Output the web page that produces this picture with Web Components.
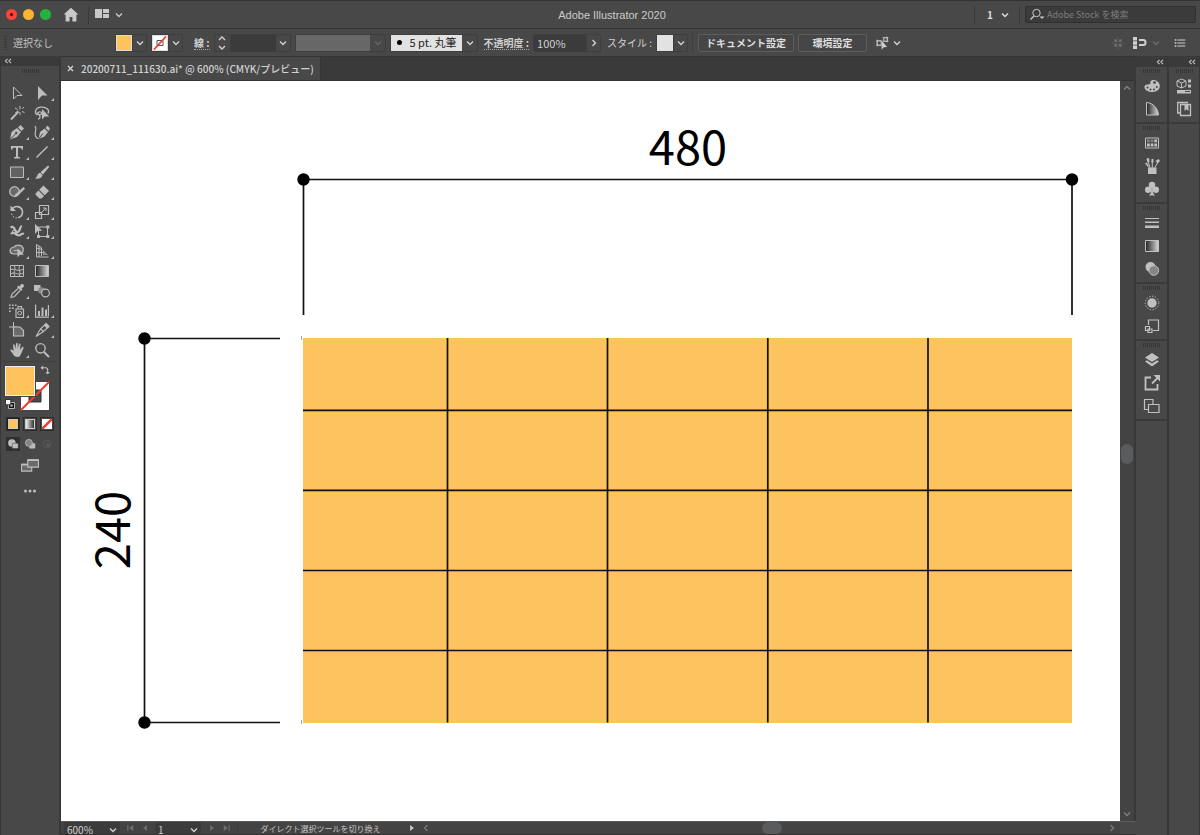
<!DOCTYPE html>
<html lang="ja">
<head>
<meta charset="utf-8">
<title>Adobe Illustrator 2020</title>
<style>
html,body{margin:0;height:100%;background:#333}
</style>
</head>
<body>
<ai-app></ai-app>
<script>
const JP = '"Noto Sans CJK JP", sans-serif';
const BASE = `
*{box-sizing:border-box}
:host{display:block}
button,select,input{font:inherit;color:inherit;margin:0;padding:0;border:0;background:none;border-radius:0;appearance:none;outline:0}
button{display:flex;align-items:center;justify-content:center;flex:none}
.drop{display:grid;grid-template-columns:1fr 14px;align-items:center}
.drop select{grid-area:1/1/2/3;height:100%;width:100%}
.drop ui-icon{grid-area:1/2;justify-self:center;pointer-events:none}
`;
function define(name, css, html){
  const t = document.createElement('template');
  t.innerHTML = `<style>${BASE}${css}</style>${html}`;
  customElements.define(name, class extends HTMLElement{
    constructor(){
      super();
      this.attachShadow({mode:'open'}).append(t.content.cloneNode(true));
    }
  });
}

/* 16-unit icon set; shapes are filled unless marked with class "s" (stroke) */
const ICONS = {
  down:'<path class="s" d="M5 6.500l3 3 3-3"/>',
  up:'<path class="s" d="M5 9.500l3-3 3 3"/>',
  right:'<path class="s" d="M6.500 5l3 3-3 3"/>',
  left:'<path class="s" d="M9.500 5l-3 3 3 3"/>',
  stepper:'<path class="s" d="M5 5l3-3 3 3M5 11l3 3 3-3"/>',
  collapse:'<path class="s" stroke-width="1.300" d="M7.500 5.500L5 8l2.500 2.500M11.500 5.500L9 8l2.500 2.500"/>',
  home:'<path d="M8 .8L.6 7.600h2V14.500h4V10h2.800v4.500h4V7.600h2z"/>',
  workspace:'<path d="M1 2h7v9H1zM9 2h6v4H9zM9 7h6v4H9z"/>',
  search:'<circle class="s" cx="7.500" cy="6" r="3.700"/><path class="s" stroke-width="1.500" d="M5 9L1.500 12.500"/><path d="M10.500 9.500h5L13 12z"/>',
  first:'<path d="M3 4h1.500v8H3zM11 4v8L5.500 8z"/>',
  prev:'<path d="M10.500 4v8L5.500 8z"/>',
  next:'<path d="M5.500 4v8l5-4z"/>',
  last:'<path d="M5 4v8l5.500-4zM11.500 4H13v8h-1.500z"/>',
  isolate:'<path class="s" d="M2.500 5.500H7v5H2.500zM10 2h4v4h-4z"/><path class="s" d="M1 5.500h7M1 10.500h6M8.500 2h7M8.500 6h7M2.500 4v8M14 .5v7" stroke-width=".7"/><path d="M7.500 5v10.500l2.500-2.700 3.800-.3z"/>',
  pixels:'<path d="M3 3h4v4H3zM9 3h4v4H9zM3 9h4v4H3zM9 9h4v4H9zM7.500 0h1v2h-1zM7.500 14h1v2h-1zM0 7.500h2v1H0zM14 7.500h2v1h-2z"/>',
  snap:'<path d="M1 2h4v3.500H1zM1 6.300h4v3.500H1zM1 10.500h4V14H1z"/><path class="s" stroke-width="2" d="M7 5h4.500q2 0 2 2.500t-2 2.500H7"/>',
  menu:'<path d="M1 3h2.200v2H1zM1 7h2.200v2H1zM1 11h2.200v2H1zM4.500 3.200H15v1.500H4.500zM4.500 7.200H15v1.500H4.500zM4.500 11.200H15v1.500H4.500z"/>',
  select:'<path class="s" d="M4.500 2v12l3.500-3.500h5z"/>',
  direct:'<path d="M4 1v14l4-4.600h5.500z"/>',
  wand:'<path class="s" stroke-width="2" d="M2 14.500l7.500-8"/><path class="s" d="M11 1v3.500M11 7v3M6 3l2.500 1.500M13 6.500l2.500 1M13.300 3.700L15 2M6.500 8L9 5.500"/>',
  lasso:'<path class="s" stroke-width="1.300" d="M3.500 10C0 8 1 3 6.500 2.200c6-.8 9.500 3 7.500 6.300M3.500 10c-1-3 4-4.500 4-1.500 0 2-4 1.500-3.500-.5M5 10c2.500 2 0 4-1 4"/><path d="M8 4v10.500l2.800-3h4.500z"/>',
  pen:'<path d="M1 15.500l1.500-7.500L8 4 12 8l-4 5zM9 3.500L11.500 1 15 4.500l-2.500 2.500z"/><path d="M1 15.500l5.500-5.500" stroke="#484848" stroke-width="1"/><circle cx="7.200" cy="9" r="1.200" fill="#484848"/>',
  curve:'<path d="M4.500 15l1.500-7L10.500 4.500 14 8l-3.500 4.500zM11.500 4L13.500 1.500 16 4.500 14.700 7z"/><path d="M4.500 15l4.500-5.500" stroke="#484848"/><path class="s" stroke-width="1.200" d="M1 2c2.500 3-1 6 .5 10 .7 2 2 2.500 3 2.800"/>',
  type:'<path d="M2 2h12v3.500h-1.300L12 3.700H9v9l2 .5v1.300H5v-1.300l2-.5v-9H4l-.7 1.800H2z"/>',
  line:'<path class="s" stroke-width="1.400" d="M2.500 13.500l11-11"/>',
  rect:'<path class="s" style="fill:#626262" d="M1.500 3h13v10.500h-13z"/>',
  brush:'<path d="M14 1.500l1.300 1.300L9 10.500 6.500 8.300zM6 8.800l2.500 2.300C8 14 5 15.300 1 14.500 3.500 13.500 3 9.500 6 8.800z"/>',
  shaper:'<circle class="s" stroke-width="1.300" style="fill:#6a6a6a" cx="5.500" cy="7.500" r="4.800"/><path d="M14.500 3L16 4.700 8.500 12 5 13.500 6.500 10.300z"/>',
  eraser:'<path d="M9.500 1.500L15 7l-4.300 4.300-5.500-5.500zM4.500 6.500l5.500 5.500-2.500 2.500H5.300L1.500 10.500V9.500z"/>',
  rotate:'<path class="s" stroke-width="1.600" d="M3.500 4.500C7 .5 13.500 3 13.500 8c0 3-2 5-4.500 5.700"/><path d="M1.500 1.500V7H7z"/><path class="s" stroke-dasharray="1.500 1.500" d="M8 14c-3 0-5.300-2-5.500-5"/>',
  scale:'<path class="s" stroke-width="1.200" d="M1.500 8.500h6v6h-6zM5.500 1.500h9v9h-9z"/><path class="s" d="M8 8l4-4M9 4h3v3"/>',
  width:'<path class="s" stroke-width="2.200" d="M1.500 4.500C6 1.500 6 11 9 9s1.500-6 4-5.500M2 11c3-4 5 3 9 1 3-1.500 2-2 4-1"/><circle class="s" cx="5" cy="9" r="1.700"/>',
  free:'<path class="s" d="M4.500 4h9v9.500h-9z"/><path d="M1 1v10l3-3.200h4.300zM12.300 2.500h3v3h-3zM12.300 12h3v3h-3zM3 12h3v3H3z"/>',
  builder:'<path class="s" stroke-width="1.200" style="fill:#6a6a6a" d="M5 4c3-3 9-2 9.300 2 .3 4-3.300 5.500-5.300 5H4C0 10 0 5 5 4z"/><path class="s" d="M5 7.500h6"/><path d="M8.500 5.500v9l2.400-2.700H15z"/>',
  perspective:'<path class="s" d="M2.500 1.500v12.500h12M2.500 1.500l5 3v8.500M2.500 5l6 1.500M2.500 9.500h7M5 3v11"/><path d="M9 7l5 5H9z" opacity=".6"/>',
  mesh:'<path class="s" d="M1.500 2.500h13v11h-13zM1.500 7c4-3 6 3 13-1M1.500 11c4-3 7 2 13-1M5 2.500c3 4-2 6 1 11M11 2.500c-3 4 2 6-1 11"/>',
  gradient:'<path class="s" style="fill:url(#g)" d="M1.500 2.500h13v11h-13z"/>',
  eyedrop:'<path d="M8 4l1.500-1.500 1 1 1.500-2c1.500-1.500 4 .8 2.500 2.500l-2 1.500 1 1L12 8z"/><path class="s" stroke-width="1.200" d="M9 5.500L3 11l-1 3.500L5.500 13.500 11 7.500"/>',
  blend:'<path d="M0 2h6.500v6H0z"/><circle cx="7.500" cy="7.500" r="3.300" style="fill:#8a8a8a"/><circle class="s" stroke-width="1.200" style="fill:#484848" cx="11.500" cy="10" r="3.900"/>',
  spray:'<path class="s" stroke-width="1.200" d="M7 6h7.500v8.500H7zM9 6V3.500h3.500V6"/><circle class="s" cx="10.700" cy="10" r="1.900"/><path d="M0 1.500h1.700V3H0zM3 1.500h1.700V3H3zM0 4.500h1.700V6H0zM3 4.500h1.700V6H3zM6 1.500h1.500V3H6zM0 7.500h1.700V9H0z"/>',
  graph:'<path d="M1 1.500h1.200v12H15v1.200H1zM4 8h2v5H4zM7.500 4.500h2V13h-2zM11 6.500h2V13h-2zM13.800 2H15v11h-1.200z"/>',
  artboard:'<path class="s" d="M0 5h9M4.500 0v8"/><path class="s" stroke-width="1.200" style="fill:#6a6a6a" d="M4.500 5h6.500l3.500 3.500v5.500h-10z"/>',
  slice:'<path class="s" stroke-width="1.200" d="M12 1.500L15 4.500 9.500 9.500 6.500 7zM6.500 7L2 14.500l7.500-5"/><path d="M12 1.500L15 4.500 13 6.500 10 3.500z"/>',
  hand:'<path d="M4.700 9L4 3.200c0-1.200 1.400-1.200 1.600 0L6.400 7 7 1.700c.2-1.200 1.600-1.200 1.700 0V7l1.200-4.800c.4-1 1.700-.7 1.600.4L11 8l2-2.800c.8-.9 2 0 1.500 1L12 12c-.7 1.600-1.200 3-3.200 3-3.200 0-4-1.400-5-3.300L1.300 8.600c0-1.400 1.500-1.300 2-.7z"/>',
  zoom:'<circle class="s" stroke-width="1.400" cx="6.500" cy="6.300" r="4.700"/><path class="s" stroke-width="2" d="M10 10l5 5"/>',
  swap:'<path class="s" stroke-width="1.500" d="M5 5h4q2.500 0 2.500 3v3"/><path d="M5.500 2v6L2 5zM8.500 10.500h6L11.500 14z"/>',
  defaults:'<path d="M6 6h8v8H6z" style="fill:#111;stroke:#ddd"/><path d="M8.500 8.500h3v3h-3z"/><path d="M2 2h7v7H2z" style="fill:#fff;stroke:#111"/>',
  drawNormal:'<circle cx="6.500" cy="6.500" r="5"/><rect x="7" y="7" width="8" height="7" rx="1" stroke="#333" stroke-width=".6"/>',
  drawBehind:'<rect x="7" y="7" width="8" height="7" rx="1"/><circle style="fill:#858585;stroke:#bbb" cx="6.500" cy="6.500" r="4.700"/>',
  drawInside:'<circle class="s" cx="8" cy="8" r="5"/><path d="M8 5v3h3v3H7z"/>',
  screen:'<path class="s" style="fill:#6a6a6a" d="M.5 6.500h9v6h-9z"/><path class="s" style="fill:#6a6a6a" d="M6 2.500h9.500v6.500H6z"/><path d="M.5 6h5.500v1.500H.5zM6 2h9.500v1.500H6z"/>',
  dots:'<circle cx="3.500" cy="8" r="1.500"/><circle cx="8" cy="8" r="1.500"/><circle cx="12.500" cy="8" r="1.500"/>',
  palette:'<path fill-rule="evenodd" d="M.5 8.500C1 6 4 7 6 6c1-.8-.5-2.500 1.500-3.500C11 1 15.800 4 15.800 8s-4 6-8 6S0 11.500.5 8.500zM9 4.500a1.500 1.300 0 1 0 3 0 1.500 1.300 0 1 0-3 0zM2.500 9.500a1 1 0 1 0 2 0 1 1 0 1 0-2 0zM5.500 11.500a1 1 0 1 0 2 0 1 1 0 1 0-2 0zM9 11.500a1 1 0 1 0 2 0 1 1 0 1 0-2 0zM11.800 9a1 1 0 1 0 2 0 1 1 0 1 0-2 0z"/>',
  guide:'<path class="s" style="fill:url(#g)" d="M2.500 1.500v12.500h12C14 7 9 2 2.500 1.500z"/>',
  swatches:'<path class="s" d="M1.500 3h13v10h-13z"/><path d="M3 4.500h2.800v2.700H3zM6.700 4.500h2.700v2.700H6.700z" opacity=".5"/><path d="M10.300 4.500H13v2.700h-2.700zM3 8.500h2.800v3H3zM6.700 8.500h2.700v3H6.700zM10.300 8.500H13v3h-2.700z"/>',
  brushes:'<path d="M4 9.500h8.500V16H4z"/><path class="s" d="M6 10L4 3M8.300 10V3M10.500 10l3-5"/><path d="M2.500.5L5 0l.5 4-2 .5zM7.500 1l2 0v3.500H7.300zM11.500 3l3-2 1.500 2-2.500 2.500z"/><path d="M.8 5l2-.3L5 8 3.800 9z"/>',
  symbols:'<circle cx="8" cy="4" r="3.200"/><circle cx="4.200" cy="8.800" r="3.200"/><circle cx="11.800" cy="8.800" r="3.200"/><path d="M7.300 7h1.400L9 12l2 2.500H5L7 12z"/>',
  stroke:'<path d="M1 3h14v1H1zM1 6.500h14V8H1zM1 10.500h14v2.500H1z"/>',
  transparency:'<circle cx="6.500" cy="6" r="5"/><circle class="s" style="fill:#858585" cx="9.800" cy="9.500" r="4.800"/>',
  appearance:'<circle cx="8" cy="8" r="4.700"/><circle class="s" stroke-dasharray="1.300 1.600" cx="8" cy="8" r="6.800"/>',
  styles:'<path class="s" stroke-width="1.200" d="M4.500 7V2h10v10.500H9"/><path class="s" stroke-width="1.200" d="M1.500 8.500h4v4h-4zM4 11h4v3.500H4z"/>',
  layers:'<path d="M8 1l7 4.500L8 10 1 5.500z"/><path d="M1 9.500L3 8.300 8 11.500l5-3.200 2 1.200L8 14.500z"/>',
  export:'<path class="s" stroke-width="1.800" d="M7 2.500H1.500v12h12V9M8 8.500l6-6"/><path d="M9.500 0H16v6.500l-2-2-2.500-2.500z"/>',
  artboards:'<path class="s" stroke-width="1.200" d="M.5 1.500h8.500v10H.5z"/><path class="s" stroke-width="1.200" style="fill:#484848" d="M4.500 6.500h10.500v8H4.500z"/>',
  properties:'<path class="s" d="M5.500 1L10 3v5L5.500 10 1 8V3zM1 3l4.500 2L10 3M5.500 5v5"/><path d="M12 1.500h3v3h-3zM12 6.500h3v3h-3zM1 12h14v3.500H1z"/><path d="M9 13h5v1H9z" fill="#484848"/>',
  libraries:'<path class="s" stroke-width="1.300" d="M4.500 3.500h10v11h-10zM12 1.500H1.700V12H4"/><path d="M8.500 4h4v6l-2-1.700-2 1.700z"/>'
};
customElements.define('ui-icon', class extends HTMLElement{
  constructor(){
    super();
    this.attachShadow({mode:'open'}).innerHTML = `<style>
      :host{display:block;flex:none;width:16px;height:16px}
      svg{display:block;width:100%;height:100%;fill:currentColor;overflow:visible}
      .s{fill:none;stroke:currentColor}
      :host([name=down]) .s,:host([name=up]) .s,:host([name=right]) .s,:host([name=left]) .s,:host([name=stepper]) .s{stroke-width:1.4}
    </style><svg viewBox="0 0 16 16" aria-hidden="true"><defs><linearGradient id="g"><stop offset="0" stop-color="#222"/><stop offset="1" stop-color="#d8d8d8"/></linearGradient></defs>${ICONS[this.getAttribute('name')]||''}</svg>`;
  }
});

define('ai-title-bar', `
:host{display:flex;align-items:center;height:29px;padding:0 4px 0 6px;border-top:1px solid #333;border-bottom:1px solid #373737;background:#484848;color:#c8c8c8}
.side{flex:1;display:flex;align-items:center}
.end{justify-content:flex-end}
.lights{display:flex;gap:6px;margin-right:12px}
.lights button{width:11px;height:11px;border-radius:50%;background:#fb4239}
.lights button:nth-child(2){background:#fdb32f}
.lights button:nth-child(3){background:#24b43c}
.dot{width:3px;height:3px;border-radius:50%;background:#400}
.bar{width:1px;height:18px;background:#3a3a3a}
.home{margin-right:9px}
.space{gap:1px;padding-left:5px}
h1{margin:0 0 0 22px;font:11px "Liberation Sans",sans-serif;color:#ccc}
.drop{width:28px;height:18px;margin:0 7px 0 9px;font-weight:bold;font-size:10px;color:#ddd}
.drop select{padding-left:3px}
label{display:flex;align-items:center;gap:2px;width:171px;height:17px;margin-left:5px;padding:0 3px;background:#3b3b3b;border:1px solid #303030;border-radius:2px}
input{flex:1;min-width:0;height:15px;font-size:9px}
input::placeholder{color:#7d7d7d;opacity:1}
`, `
<div class="side">
  <div class="lights"><button aria-label="閉じる"><span class="dot"></span></button><button aria-label="しまう"></button><button aria-label="拡大"></button></div>
  <button class="home" aria-label="ホーム"><ui-icon name="home"></ui-icon></button>
  <span class="bar"></span>
  <button class="space" aria-label="ドキュメントレイアウト"><ui-icon name="workspace"></ui-icon><ui-icon name="down"></ui-icon></button>
</div>
<h1>Adobe Illustrator 2020</h1>
<div class="side end">
  <span class="bar"></span>
  <div class="drop"><select aria-label="ワークスペース"><option>1</option></select><ui-icon name="down"></ui-icon></div>
  <span class="bar"></span>
  <label><ui-icon name="search"></ui-icon><input type="search" aria-label="Adobe Stock を検索" placeholder="Adobe Stock を検索"></label>
</div>`);

define('ai-control-bar', `
:host{display:flex;align-items:center;height:27px;padding:0 14px 0 4px;background:#484848;color:#d0d0d0;font-size:10px;white-space:nowrap}
.grip{width:3px;height:16px;margin-right:6px;background:repeating-linear-gradient(#3a3a3a 0 1px,#484848 1px 2px)}
.status{width:98px;color:#c4c4c4}
.box{display:flex;height:18px;border:1px solid #3e3e3e;border-radius:2px;align-items:center}
.box .go{width:14px;height:16px;border-left:1px solid #3e3e3e}
.sw{width:16px;height:16px;border:1px solid #ddd;background:#ffc35e}
.sw.none{background:#fff}
.sw.none svg{width:14px;height:14px}
.sw.flat{background:#e2e2e2;border-color:#e2e2e2}
.u{border-bottom:1px dotted #aaa;line-height:13px;font-weight:bold}
.weight{margin:0 4px 0 11px}
.step{border-right:0}
.step button{width:15px}
.well{background:#3b3b3b;height:16px;min-width:0}
.gap{margin-left:4px}
.wide{margin-left:6px}
.drop{height:18px;border:1px solid #3e3e3e;border-radius:2px}
.line select{background:linear-gradient(90deg,#3b3b3b calc(100% - 14px),transparent 0)}
.line{width:61px}
.profile{width:91px}
.profile select{background:linear-gradient(90deg,#757575 calc(100% - 15px),transparent 0)}
.profile ui-icon{color:#666}
.brush{width:88px}
.brush select{background:linear-gradient(90deg,#e2e2e2 calc(100% - 15px),transparent 0);color:#222;padding-left:19px;font-size:11px}
.brush i{grid-area:1/1;width:5px;height:5px;border-radius:50%;background:#000;margin-left:6px;pointer-events:none;z-index:1}
.brush ui-icon{color:#d0d0d0}
.opacity input{width:52px;padding-left:3px;font-size:11px}
.bar{width:1px;height:20px;background:#3e3e3e;margin:0 5px 0 4px}
.push{height:18px;border:1px solid #5d5d5d;border-radius:2px;font-weight:bold;font-size:10px;color:#dedede;background:#464646}
.doc{width:96px;margin-right:4px}.env{width:69px}
.iso{margin-left:8px}
.iso ui-icon:first-child{width:14px;height:14px}
.fill{flex:1}
.dim{color:#6c6c6c}
.pix{margin-right:8px}
.opt{margin-right:10px}
.small{width:12px;height:12px}
`, `
<span class="grip"></span><span class="status">選択なし</span>
<div class="box gap"><button class="sw" aria-label="塗り"></button><button class="go" aria-label="塗りスウォッチ"><ui-icon name="down"></ui-icon></button></div>
<div class="box gap"><button class="sw none" aria-label="線カラー"><svg viewBox="0 0 14 14"><path d="M4 4.500h6v5H4z" fill="none" stroke="#555"/><path d="M1 13.500L13 .5" stroke="#f03a2d" stroke-width="1.700"/></svg></button><button class="go" aria-label="線スウォッチ"><ui-icon name="down"></ui-icon></button></div>
<label class="u weight" for="weight">線 :</label>
<div class="box step"><button aria-label="線幅の増減"><ui-icon name="stepper"></ui-icon></button></div>
<div class="drop line"><select id="weight"><option></option></select><ui-icon name="down"></ui-icon></div>
<div class="drop profile gap"><select aria-label="可変線幅プロファイル" disabled><option></option></select><ui-icon name="down"></ui-icon></div>
<div class="drop brush gap"><select aria-label="ブラシ定義"><option>5 pt. 丸筆</option></select><i></i><ui-icon name="down"></ui-icon></div>
<label class="u wide" for="op">不透明度 :</label>
<div class="box gap opacity"><input class="well" id="op" value="100%"><button class="go" aria-label="不透明度スライダー"><ui-icon name="right"></ui-icon></button></div>
<label class="wide" for="style">スタイル :</label>
<div class="box gap"><button class="sw flat" id="style" aria-label="スタイル"></button><button class="go" aria-label="グラフィックスタイル"><ui-icon name="down"></ui-icon></button></div>
<span class="bar"></span>
<button class="push doc">ドキュメント設定</button><button class="push env">環境設定</button>
<button class="iso" aria-label="オブジェクトを一括選択"><ui-icon name="isolate"></ui-icon><ui-icon name="down"></ui-icon></button>
<span class="fill"></span>
<button class="dim pix" aria-label="ピクセルに整合"><ui-icon class="small" name="pixels"></ui-icon></button>
<button aria-label="スナップ"><ui-icon name="snap"></ui-icon></button>
<button class="dim opt" aria-label="スナップオプション"><ui-icon name="down"></ui-icon></button>
<button aria-label="メニュー"><ui-icon class="small" name="menu"></ui-icon></button>`);

const tools = ['select','direct','wand','lasso','pen','curve','type','line','rect','brush','shaper','eraser','rotate','scale','width','free','builder','perspective','mesh','gradient','eyedrop','blend','spray','graph','artboard','slice','hand','zoom'];
const single = ['select','wand','lasso','mesh','gradient','blend','artboard','zoom'];
define('ai-toolbox', `
:host{width:61px;background:#484848;border:solid #383838;border-width:0 2px 0 1px;color:#bdbdbd}
header{height:10px;background:#3a3a3a;display:flex;align-items:center}
header ui-icon{width:14px;height:14px}
.grip{width:17px;height:4px;margin:3px auto 10px;background:repeating-linear-gradient(90deg,#363636 0 1px,#484848 1px 2px)}
.tools{display:grid;grid-template:repeat(14,1fr)/25px 25px;height:277px;margin-left:3px}
.tools button{position:relative}
.tools .more::after{content:"";position:absolute;right:0;bottom:2px;border-left:3px solid transparent;border-bottom:3px solid #bdbdbd}
hr{border:0;height:1px;background:#3f3f3f;margin:1px 2px 4px}
.paint{position:relative;height:46px;margin-left:4px}
.paint>*{position:absolute}
.fill{left:0;top:0;width:30px;height:30px;background:#ffc35e;border:1px solid #eee;outline:1px solid #444}
.stroke{left:15px;top:15px}
.stroke svg{display:block;width:30px;height:30px}
.swap{left:34px;top:-2px}
.def{left:-1px;top:32px}
.row{display:flex;margin-left:5px;gap:3px}
.row button{width:14px;height:14px}
.modes{padding-top:5px}
.modes button{border:1px solid #2c2c2c}
.modes span{display:block;width:10px;height:10px;border:1px solid #ccc}
.modes svg{width:10px;height:10px;background:#fff}
.draw{margin-top:6px}
.draw button:first-child{background:#303030}
.draw button:last-child{color:#5e5e5e}
.small{width:12px;height:12px}
.screen{width:100%;margin-top:6px}
.screen ui-icon{width:20px;height:18px}
.more-tools{width:100%;margin-top:8px}
`, `
<header><ui-icon name="collapse"></ui-icon></header>
<div class="grip"></div>
<div class="tools">${tools.map(t=>`<button aria-label="${t}" class="${single.includes(t)?'':'more'}"><ui-icon name="${t}"></ui-icon></button>`).join('')}</div>
<hr>
<div class="paint">
  <button class="stroke" aria-label="線"><svg viewBox="0 0 30 30"><path d="M.5.5h29v29H.5z" fill="#fff" stroke="#444"/><path d="M9 9h12v12H9z" fill="#484848" stroke="#333"/><path d="M1 29L29 1" stroke="#f03a2d" stroke-width="2"/></svg></button>
  <button class="fill" aria-label="塗り"></button>
  <button class="swap" aria-label="入れ替え"><ui-icon class="small" name="swap"></ui-icon></button>
  <button class="def" aria-label="初期設定"><ui-icon class="small" name="defaults"></ui-icon></button>
</div>
<div class="row modes">
  <button aria-label="カラー" style="background:#222"><span style="background:#ffc35e"></span></button>
  <button aria-label="グラデーション"><span style="background:linear-gradient(90deg,#eee,#333)"></span></button>
  <button aria-label="なし"><svg viewBox="0 0 10 10"><path d="M0 10L10 0" stroke="#f03a2d" stroke-width="2.500"/></svg></button>
</div>
<div class="row draw">
  <button aria-label="標準描画"><ui-icon class="small" name="drawNormal"></ui-icon></button>
  <button aria-label="背面描画"><ui-icon class="small" name="drawBehind"></ui-icon></button>
  <button aria-label="内側描画"><ui-icon class="small" name="drawInside"></ui-icon></button>
</div>
<button class="screen" aria-label="スクリーンモード"><ui-icon name="screen"></ui-icon></button>
<button class="more-tools" aria-label="ツールバーを編集"><ui-icon name="dots"></ui-icon></button>`);

define('ai-artwork', `
:host{background:#fff;min-height:0;min-width:0;overflow:hidden}
svg{display:block;width:100%;height:100%}
text{font:47px "Noto Sans CJK JP",sans-serif;text-anchor:middle}
.l{fill:none;stroke:#111;stroke-width:1.700}
`, `
<svg viewBox="61 81 1059 740" role="img" aria-label="480 × 240">
  <rect x="303" y="338" width="769" height="385" fill="#fdc35f"/>
  <path class="l" d="M447.500 338v384.500M607.500 338v384.500M767.800 338v384.500M928 338v384.500M303 410.300h769M303 490.400h769M303 570.500h769M303 650.500h769"/>
  <path class="l" d="M303.500 315V179.500H1072V315M280 338.500H144.500V722.500H280"/>
  <circle cx="303.500" cy="179.500" r="6.200"/><circle cx="1072" cy="179.500" r="6.200"/>
  <circle cx="144.500" cy="338.500" r="6.200"/><circle cx="144.500" cy="722.500" r="6.200"/>
  <path d="M301.500 336v4M301.500 720v4" stroke="#9aa5b5"/>
  <text x="688" y="165">480</text>
  <text transform="translate(130 530) rotate(-90)">240</text>
</svg>`);

define('ai-document', `
:host{flex:1;min-width:0;display:grid;grid-template:25px 1fr 14px/1fr 16px}
.tabs{grid-column:1/3;display:flex;background:#3a3a3a;border-top:1px solid #343434;border-bottom:1px solid #333}
.tab{display:flex;align-items:center;gap:7px;height:23px;padding:0 6px;background:#484848;border-right:1px solid #343434;color:#d2d2d2;font-size:10px;font-weight:500;white-space:nowrap}
.tab svg{width:7px;height:7px;stroke:#d2d2d2;stroke-width:1.400}
.v{display:flex;flex-direction:column;align-items:center;background:#434343;border-right:2px solid #383838;color:#808080}
.v button{height:14px;width:14px}
.track{flex:1;width:12px;position:relative}
.thumb{position:absolute;background:#595b5c;border-radius:6px}
.track .thumb{left:0;width:12px;top:49%;height:20px}
footer{grid-column:1/3;display:flex;align-items:center;background:#434343;border-top:1px solid #5a5a5a;border-bottom:1px solid #333;color:#d0d0d0;font-size:10px;height:14px;overflow:hidden}
.drop{height:13px;margin-left:3px;background:#3b3b3b}
.drop select{padding:1px 0 0 3px;line-height:12px}
.zoom{width:56px}.page{width:46px}
.nav{display:flex;color:#6e6e6e;margin-left:4px}
.nav button{width:14px;height:12px}
.nav ui-icon{width:12px;height:12px}
.play{color:#ccc;margin-left:2px}
.msg{width:166px;text-align:center;white-space:nowrap;font-size:8px;line-height:12px;padding-top:1px;border-left:1px solid #3a3a3a;margin-left:4px;color:#c4c4c4}
.h{flex:1;position:relative;height:12px;display:flex;justify-content:space-between;color:#777;padding-right:1px}
.h .thumb{left:49%;width:20px;height:12px}
.h button{width:14px}
.corner{width:16px;height:12px;background:#484848}
`, `
<div class="tabs"><div class="tab"><svg viewBox="0 0 7 7"><path d="M1 1l5 5M6 1L1 6"/></svg><span>20200711_111630.ai* @ 600% (CMYK/プレビュー)</span></div></div>
<ai-artwork></ai-artwork>
<div class="v"><button aria-label="上"><ui-icon name="up"></ui-icon></button><div class="track"><span class="thumb"></span></div><button aria-label="下"><ui-icon name="down"></ui-icon></button></div>
<footer>
  <div class="drop zoom"><select aria-label="ズーム"><option>600%</option></select><ui-icon name="down"></ui-icon></div>
  <div class="nav"><button aria-label="最初"><ui-icon name="first"></ui-icon></button><button aria-label="前"><ui-icon name="prev"></ui-icon></button></div>
  <div class="drop page"><select aria-label="アートボード"><option>1</option></select><ui-icon name="down"></ui-icon></div>
  <div class="nav"><button aria-label="次"><ui-icon name="next"></ui-icon></button><button aria-label="最後"><ui-icon name="last"></ui-icon></button></div>
  <span class="msg">ダイレクト選択ツールを切り換え</span>
  <div class="nav play"><button aria-label="表示"><ui-icon name="next"></ui-icon></button></div>
  <div class="h"><button aria-label="左"><ui-icon name="left"></ui-icon></button><span class="thumb"></span><button aria-label="右"><ui-icon name="right"></ui-icon></button></div>
  <span class="corner"></span>
</footer>`);

const group = names => `<section><i></i>${names.map(n=>`<button aria-label="${n}"><ui-icon name="${n}"></ui-icon></button>`).join('')}</section>`;
const dock = (name, size, groups) => define(name, `
:host{${size};background:#484848;color:#c0c0c0}
header{height:11px;background:#3a3a3a;display:flex;justify-content:flex-end;align-items:center}
header ui-icon{width:14px;height:14px}
section{border-bottom:2px solid #3a3a3a;padding:2px 0}
i{display:block;width:17px;height:4px;margin:0 auto 1px;background:repeating-linear-gradient(90deg,#363636 0 1px,#484848 1px 2px)}
section button{width:100%;height:23px}
`, `<header><ui-icon name="collapse"></ui-icon></header>${groups.map(group).join('')}`);
dock('ai-dock', 'width:33px;border-right:2px solid #383838', [['palette','guide'],['swatches','brushes','symbols'],['stroke','gradient','transparency'],['appearance','styles'],['layers','export','artboards']]);
dock('ai-side-dock', 'width:31px;border-right:1px solid #383838', [['properties','libraries']]);

define('ai-app', `
:host{display:flex;flex-direction:column;height:100vh;min-height:520px;font-family:${JP};font-size:10px;line-height:1.2;color:#ccc;overflow:hidden}
main{flex:1;display:flex;min-height:0}
`, `
<ai-title-bar></ai-title-bar>
<ai-control-bar></ai-control-bar>
<main><ai-toolbox></ai-toolbox><ai-document></ai-document><ai-dock></ai-dock><ai-side-dock></ai-side-dock></main>`);
</script>
</body>
</html>
